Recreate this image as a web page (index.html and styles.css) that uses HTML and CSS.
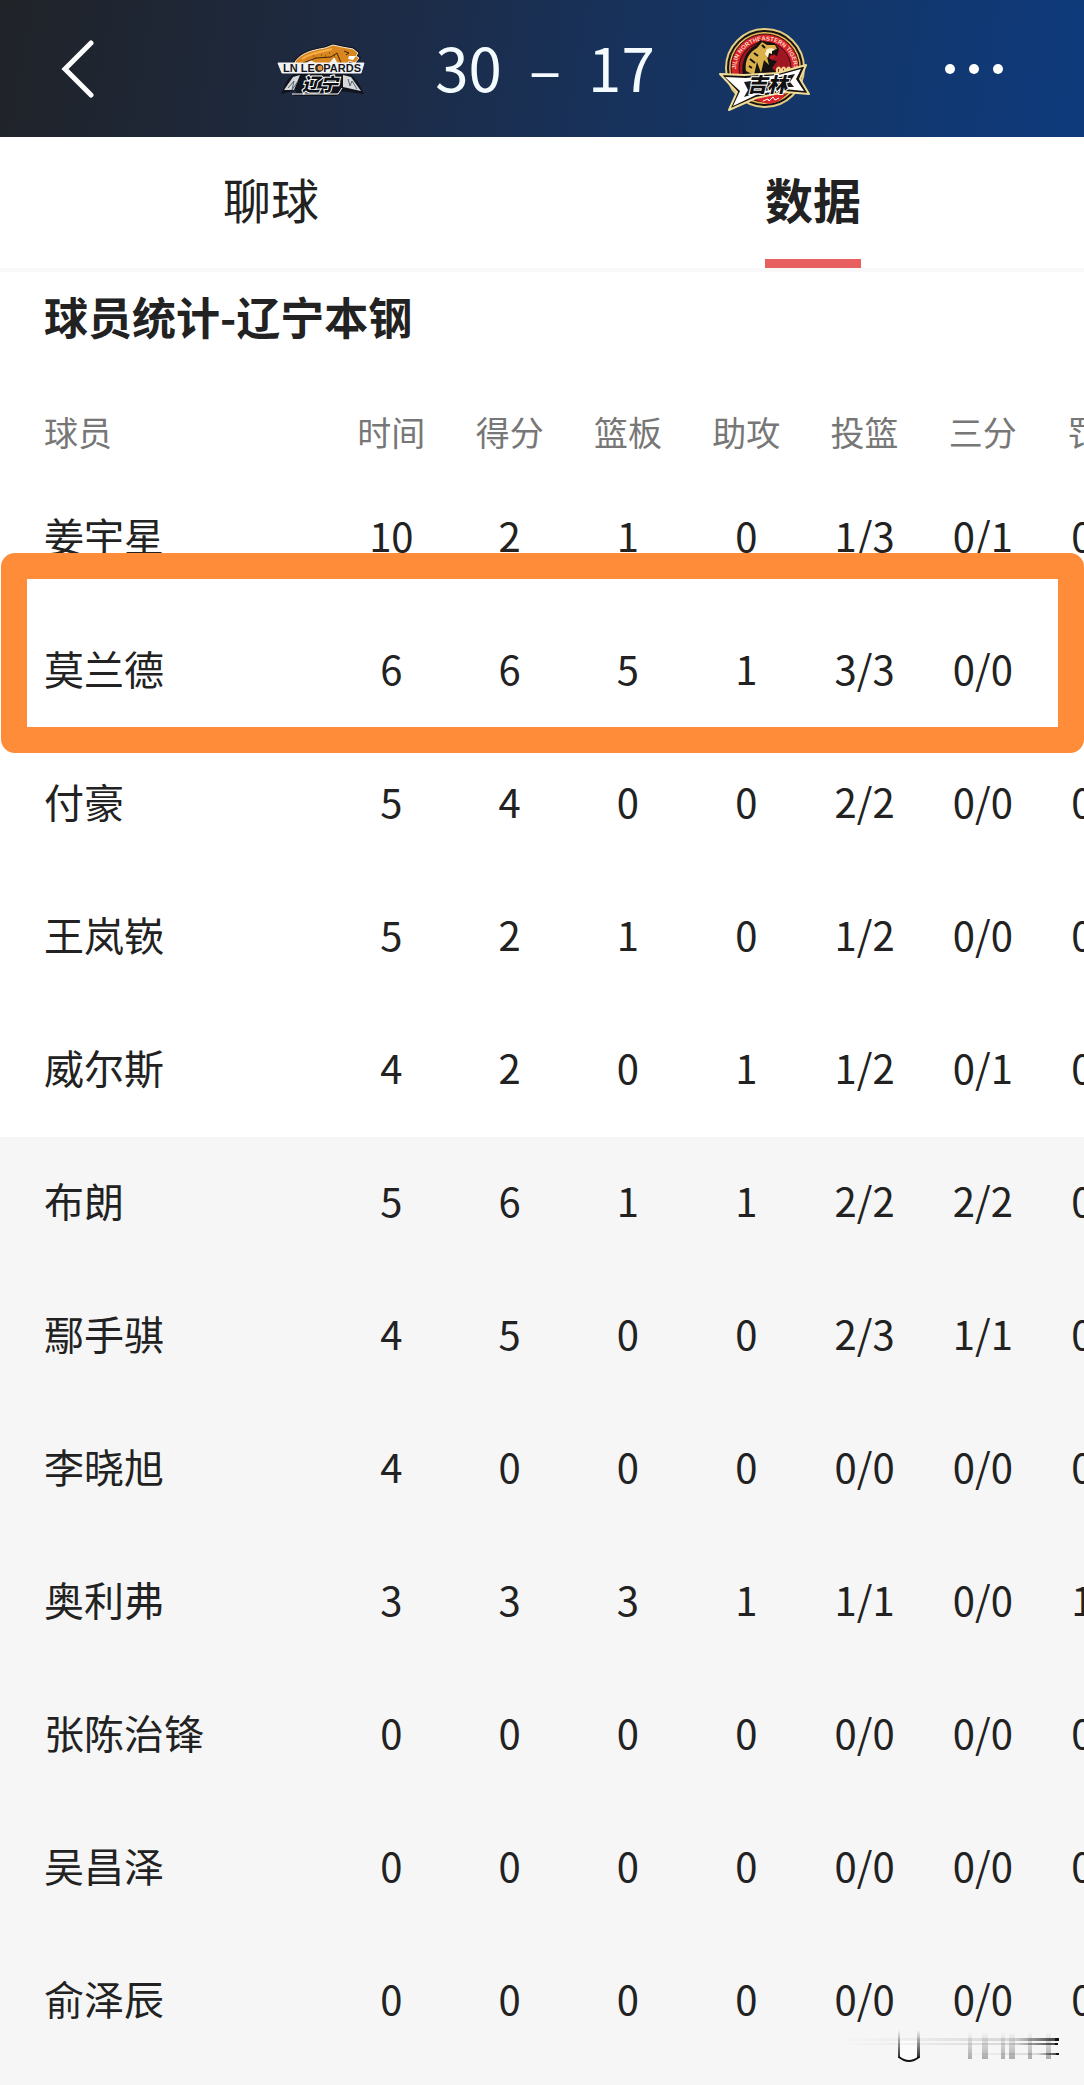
FILE: index.html
```html
<!DOCTYPE html>
<html lang="zh-CN">
<head>
<meta charset="utf-8">
<meta name="viewport" content="width=device-width, initial-scale=1">
<title>球员统计-辽宁本钢</title>
<link rel="stylesheet" href="styles.css">
</head>
<body>
<header class="topbar">
  <button class="icon-button back" type="button" aria-label="返回">
    <svg width="34" height="58" viewBox="0 0 34 58"><path d="M31 3 5 29 31 55" fill="none" stroke="#fff" stroke-width="5" stroke-linecap="round" stroke-linejoin="miter"/></svg>
  </button>
  <div class="match">
    <svg class="logo" width="90" height="56" viewBox="0 0 90 56" role="img" aria-label="辽宁">
      <path d="M4 53 9 41 16 33H74L81 41 87 53 64 50 60 55H17L20 49Z" fill="#10141c"/>
      <path d="M7 49 16 36 23 34 17 49Z" fill="#d5d8dc"/>
      <path d="m11 47 6-7-2 9 6-9" fill="none" stroke="#59616c" stroke-width="1"/>
      <path d="M66 34 74 36 84 50 66 46Z" fill="#d5d8dc"/>
      <path d="m71 38 2 7 2-5 5 8" fill="none" stroke="#59616c" stroke-width="1"/>
      <path d="M17 23C22 12 36 9 48 7L56 4 65 6 76 8 81 12 79 15 82 17 78 22 72 20 70 25H17Z" fill="#e18a24" stroke="#11151d" stroke-width="3"/>
      <path d="M17 23C22 12 36 9 48 7L56 4 65 6 76 8 81 12 79 15 82 17 78 22 72 20 70 25H17Z" fill="#d9861f" stroke="#f8ead2" stroke-width="1"/>
      <path d="M25 18C33 12 45 11 55 8" fill="none" stroke="#f6b04a" stroke-width="2"/>
      <path d="M26 22 39 17 54 16 60 12 64 22M67 10l5 2-3 2" fill="none" stroke="#3b230f" stroke-width="1"/>
      <path d="M72 15 79 15 76 19 71 18Z" fill="#fff"/>
      <path d="M44 14h1m3 1h1m3-3h1m-15 5h1m18-2h1m-22 0h1" stroke="#5a3512" stroke-width="1"/>
      <path d="M1 22H30L34 20 38 22H53L57 17 60 22H87L84 32H5Z" fill="#f3f3f3" stroke="#f3f3f3" stroke-width="1"/>
      <text class="leopards" x="45" y="31" text-anchor="middle">LN LEOPARDS</text>
      <circle cx="43" cy="27" r="3" fill="#d99648" stroke="#563411" stroke-width="1"/>
      <text class="liaoning" x="43" y="50" text-anchor="middle">辽宁</text>
      <path d="M15 53H61L65 47" fill="none" stroke="#fff" stroke-width="1"/>
    </svg>
    <div class="score"><span>30</span><span>–</span><span>17</span></div>
    <svg class="logo" width="92" height="88" viewBox="0 0 92 88" role="img" aria-label="吉林">
      <defs><path id="ring" d="M18 52A29 29 0 1 1 74 52"/></defs>
      <circle cx="46" cy="43" r="39" fill="#161313" stroke="#e6cd84" stroke-width="2"/>
      <circle cx="46" cy="43" r="36" fill="#e2b95b"/>
      <circle cx="46" cy="43" r="34" fill="#d8232a" stroke="#351013" stroke-width="1"/>
      <text class="tigers"><textPath href="#ring" startOffset="50%" text-anchor="middle">JILIN NORTHEASTERN TIGERS</textPath></text>
      <circle cx="46" cy="43" r="26" fill="#9e1722" stroke="#2b0d10" stroke-width="1"/>
      <path d="M24 52C21 35 29 24 37 20L41 15 47 17 55 18 60 24 58 31 54 29 53 35 58 36 53 43 62 52Z" fill="#15110f"/>
      <path d="M27 46C25 34 32 26 38 23L43 17 48 20 56 20 58 24 51 26 48 32 50 40 45 35 42 48 38 37 35 50Z" fill="#d9b04a"/>
      <path d="m31 34 5 4M35 28l4 3M30 41l3 2M43 20l3 3" stroke="#15110f" stroke-width="2"/>
      <path d="m48 24 5-1 3 2-3 1v3l-3-1-1 5-3-4Z" fill="#fff3d0"/>
      <path d="M52 30 57 31 53 35 50 33Z" fill="#c31822"/>
      <path d="M58 48v-4q2-3 3 0v4m2 0v-4q2-3 3 0v4m2 0v-4q2-3 3 0v4" fill="none" stroke="#f2d58b" stroke-width="2"/>
      <path d="M1 49 25 50 59 48 87 40 81 54 90 69 66 67 37 73 10 85 18 67Z" fill="#17130f" stroke="#efdc96" stroke-width="2" stroke-linejoin="round"/>
      <path d="M6 52 27 53 60 50 82 44 77 54 85 66 65 64 37 70 14 81 21 66Z" fill="#fff"/>
      <path d="M25 57 61 52 76 49 71 57 75 62 64 62 37 68 25 72 29 65Z" fill="#1b1817"/>
      <text class="jilin" x="48" y="67" text-anchor="middle">吉林</text>
      <path d="m39 76 9-4 15-2 2 2-7 5-8 2Z" fill="#d8232a"/>
      <path d="m44 76 5-2 1 2 4-4 2 3 4-2" fill="none" stroke="#fff" stroke-width="1"/>
    </svg>
  </div>
  <button class="icon-button more" type="button" aria-label="更多">
    <svg width="60" height="12" viewBox="0 0 60 12" fill="#fff"><circle cx="6" cy="6" r="5"/><circle cx="30" cy="6" r="5"/><circle cx="54" cy="6" r="5"/></svg>
  </button>
</header>

<nav class="tabs">
  <a class="tab" href="#chat">聊球</a>
  <a class="tab active" href="#data" aria-current="page">数据</a>
</nav>

<main class="stats" id="data">
  <h1 class="title">球员统计-辽宁本钢</h1>
  <div class="scroller">
    <table class="table">
      <colgroup><col class="name-col"><col span="7"></colgroup>
      <thead>
        <tr><th scope="col">球员</th><th scope="col">时间</th><th scope="col">得分</th><th scope="col">篮板</th><th scope="col">助攻</th><th scope="col">投篮</th><th scope="col">三分</th><th scope="col">罚球</th></tr>
      </thead>
      <tbody>
        <tr><th scope="row">姜宇星</th><td>10</td><td>2</td><td>1</td><td>0</td><td>1/3</td><td>0/1</td><td>0/0</td></tr>
        <tr><th scope="row">莫兰德</th><td>6</td><td>6</td><td>5</td><td>1</td><td>3/3</td><td>0/0</td><td>0/0</td></tr>
        <tr><th scope="row">付豪</th><td>5</td><td>4</td><td>0</td><td>0</td><td>2/2</td><td>0/0</td><td>0/0</td></tr>
        <tr><th scope="row">王岚嵚</th><td>5</td><td>2</td><td>1</td><td>0</td><td>1/2</td><td>0/0</td><td>0/0</td></tr>
        <tr><th scope="row">威尔斯</th><td>4</td><td>2</td><td>0</td><td>1</td><td>1/2</td><td>0/1</td><td>0/0</td></tr>
      </tbody>
      <tbody class="bench">
        <tr><th scope="row">布朗</th><td>5</td><td>6</td><td>1</td><td>1</td><td>2/2</td><td>2/2</td><td>0/0</td></tr>
        <tr><th scope="row">鄢手骐</th><td>4</td><td>5</td><td>0</td><td>0</td><td>2/3</td><td>1/1</td><td>0/0</td></tr>
        <tr><th scope="row">李晓旭</th><td>4</td><td>0</td><td>0</td><td>0</td><td>0/0</td><td>0/0</td><td>0/0</td></tr>
        <tr><th scope="row">奥利弗</th><td>3</td><td>3</td><td>3</td><td>1</td><td>1/1</td><td>0/0</td><td>1/2</td></tr>
        <tr><th scope="row">张陈治锋</th><td>0</td><td>0</td><td>0</td><td>0</td><td>0/0</td><td>0/0</td><td>0/0</td></tr>
        <tr><th scope="row">吴昌泽</th><td>0</td><td>0</td><td>0</td><td>0</td><td>0/0</td><td>0/0</td><td>0/0</td></tr>
        <tr><th scope="row">俞泽辰</th><td>0</td><td>0</td><td>0</td><td>0</td><td>0/0</td><td>0/0</td><td>0/0</td></tr>
      </tbody>
    </table>
  </div>
  <div class="highlight"></div>
  <svg class="smudge" width="230" height="36" viewBox="0 0 230 36" aria-hidden="true">
    <defs>
      <linearGradient id="across"><stop offset="0" stop-color="#222" stop-opacity="0"/><stop offset=".4" stop-color="#222" stop-opacity=".06"/><stop offset=".8" stop-color="#222" stop-opacity=".15"/><stop offset="1" stop-color="#111" stop-opacity=".8"/></linearGradient>
      <linearGradient id="down" x2="0" y2="1"><stop offset="0" stop-color="#222" stop-opacity="0"/><stop offset="1" stop-color="#222" stop-opacity=".35"/></linearGradient>
      <linearGradient id="strong" x2="0" y2="1"><stop offset="0" stop-color="#111" stop-opacity="0"/><stop offset="1" stop-color="#111" stop-opacity=".9"/></linearGradient>
    </defs>
    <path d="M70 11H87V29Q78 35 69 29Z" fill="#fff" fill-opacity=".7"/>
    <g fill="url(#across)"><path d="M6 9H226V12H6Z"/><path d="M6 14H226V16H6Z"/><path d="M130 24H226V26H130Z"/></g>
    <g fill="url(#down)"><path d="M137 3h4v27h-4Z"/><path d="M151 3h6v27h-6Z"/><path d="M170 3h4v27h-4Z"/><path d="M178 3h6v27h-6Z"/><path d="M197 3h4v27h-4Z"/><path d="M215 3h5v27h-5Z"/></g>
    <g fill="url(#strong)"><path d="M67 1h2v28h-2Z"/><path d="M86 1h3v28h-3Z"/></g>
    <path d="M68 28Q78 36 88 28" fill="none" stroke="#111" stroke-width="2"/>
    <path d="M224 9h4v3h-4Zm0 5h3v2h-3Zm1 10h3v2h-3Z" fill="#111"/>
  </svg>
</main>
</body>
</html>
```
FILE: styles.css
```css
* {
  box-sizing: border-box;
}

body {
  margin: 0;
  background: #f6f6f6;
  color: #222;
  font-family: "Noto Sans CJK SC", sans-serif;
}

/* Match header */
.topbar {
  display: grid;
  grid-template-columns: 1fr auto 1fr;
  align-items: center;
  height: 137px;
  padding: 0 80px 0 60px;
  background: linear-gradient(100deg, #202328 0%, #1d2b45 35%, #17325c 58%, #12376d 80%, #0e3a7c 100%);
}

.icon-button {
  display: flex;
  padding: 0;
  border: 0;
  background: none;
}

.more {
  justify-self: end;
}

.match {
  display: flex;
  align-items: center;
  gap: 64px;
  margin-left: 24px;
}

.score {
  display: flex;
  gap: 27px;
  padding: 0 0 6px 4px;
  color: #f4fbff;
  font-size: 60px;
  line-height: 80px;
}

.leopards {
  fill: #14171d;
  font: bold 11px "Liberation Sans", sans-serif;
}

.liaoning {
  fill: #0c0f14;
  stroke: #fff;
  stroke-width: 2px;
  paint-order: stroke;
  font: italic 900 18px "Noto Sans CJK SC", sans-serif;
}

.tigers {
  fill: #ffd9c0;
  font: bold 6px "Liberation Sans", sans-serif;
}

.jilin {
  fill: #111;
  stroke: #fff;
  stroke-width: 2px;
  paint-order: stroke;
  font: italic 900 20px "Noto Sans CJK SC", sans-serif;
}

/* Tabs */
.tabs {
  display: flex;
  height: 135px;
  border-bottom: 4px solid #f8f8f8;
  background: #fff;
}

.tab {
  display: flex;
  flex: 1;
  flex-direction: column;
  align-items: center;
  justify-content: space-between;
  padding-top: 27px;
  color: #222;
  font-size: 48px;
  line-height: 68px;
  text-decoration: none;
}

.tab.active {
  font-weight: 700;
}

.tab.active::after {
  width: 96px;
  height: 9px;
  background: #e85f5f;
  content: "";
}

/* Player statistics */
.stats {
  position: relative;
  padding-bottom: 17px;
}

.title {
  margin: 0;
  padding: 12px 44px 47px;
  background: #fff;
  font-size: 44px;
  font-weight: 700;
  line-height: 64px;
}

.scroller {
  overflow: hidden;
}

.table {
  width: 107%;
  border-collapse: collapse;
  table-layout: fixed;
  background: #fff;
  font-size: 40px;
  line-height: 60px;
}

.name-col {
  width: 28.6%;
}

.table th,
.table td {
  height: 133px;
  padding: 0 0 8px 1px;
  font-weight: 400;
  text-align: center;
  white-space: nowrap;
}

.table thead th {
  height: 77px;
  padding-bottom: 4px;
  color: #777;
  font-size: 34px;
}

.table th:first-child {
  padding-left: 44px;
  text-align: left;
}

.bench {
  background: #f6f6f6;
}

/* Frame drawn over the second player's row */
.highlight {
  position: absolute;
  top: 281px;
  right: 0;
  left: 1px;
  height: 200px;
  border: 26px solid #ff8c39;
  border-radius: 14px;
  pointer-events: none;
}

.smudge {
  position: absolute;
  right: 23px;
  bottom: 20px;
}
```
